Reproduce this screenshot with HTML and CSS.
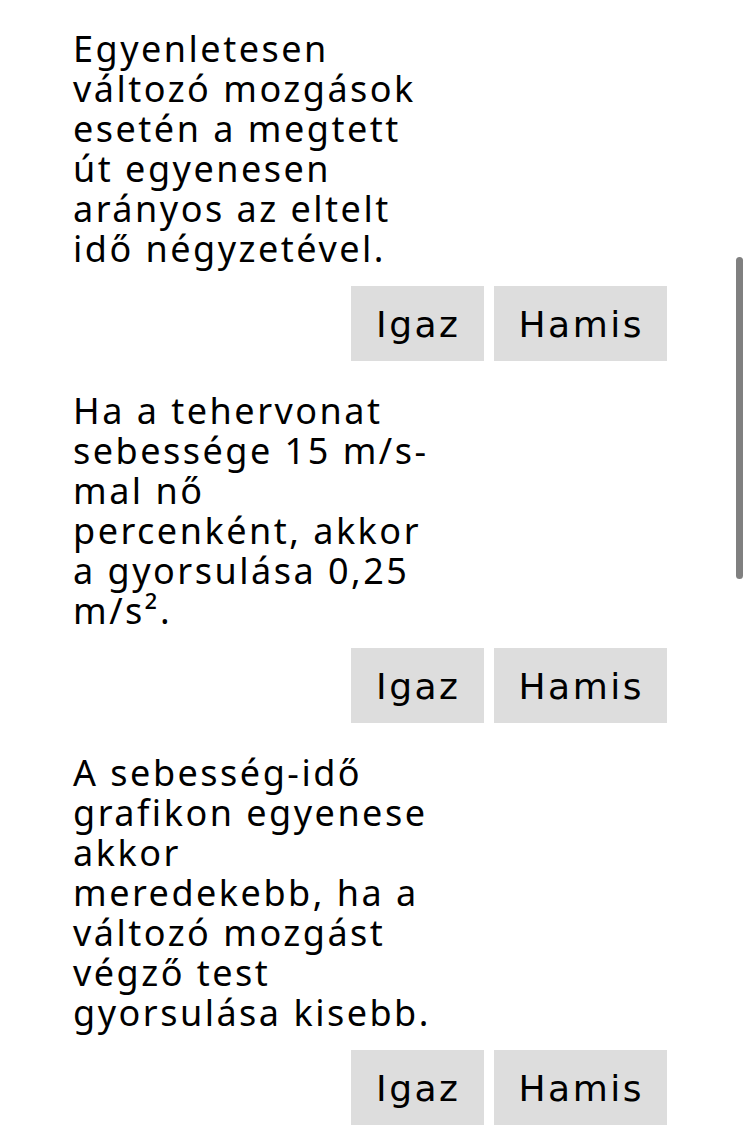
FILE: index.html
```html
<!DOCTYPE html>
<html lang="hu">
<head>
<meta charset="utf-8">
<title>Igaz vagy hamis</title>
<link rel="stylesheet" href="styles.css">
</head>
<body>
<main class="quiz">
  <section class="item">
    <p class="statement">Egyenletesen változó mozgások esetén a megtett út egyenesen arányos az eltelt idő négyzetével.</p>
    <div class="answers">
      <button class="btn">Igaz</button>
      <button class="btn">Hamis</button>
    </div>
  </section>
  <section class="item">
    <p class="statement">Ha a tehervonat sebessége 15 m/s-mal nő percenként, akkor a gyorsulása 0,25 m/s².</p>
    <div class="answers">
      <button class="btn">Igaz</button>
      <button class="btn">Hamis</button>
    </div>
  </section>
  <section class="item">
    <p class="statement">A sebesség-idő grafikon egyenese akkor meredekebb, ha a változó mozgást végző test gyorsulása kisebb.</p>
    <div class="answers">
      <button class="btn">Igaz</button>
      <button class="btn">Hamis</button>
    </div>
  </section>
</main>
<div class="scrollbar"></div>
</body>
</html>
```

FILE: styles.css
```css
html, body {
  margin: 0;
  padding: 0;
  background: #ffffff;
  height: 100%;
  overflow: hidden;
}
body {
  font-family: "Noto Sans", "Open Sans", sans-serif;
  color: #000000;
}
.quiz {
  width: 594px;
  margin-left: 73px;
  padding-top: 29px;
  display: flex;
  flex-direction: column;
  gap: 30px;
}
.item {
  display: flex;
  flex-direction: column;
  gap: 17px;
}
.statement {
  margin: 0;
  width: 361px;
  font-size: 36px;
  line-height: 40px;
  letter-spacing: 2.5px;
}
.answers {
  display: flex;
  justify-content: flex-end;
  gap: 10px;
}
.btn {
  font-family: "DejaVu Sans", sans-serif;
  font-size: 36px;
  line-height: 41px;
  letter-spacing: 2.5px;
  padding: 18px 23px 16px 25px;
  border: none;
  border-radius: 0;
  background: #dddddd;
  color: #000000;
  margin: 0;
}
.scrollbar {
  position: absolute;
  left: 736px;
  top: 257px;
  width: 7px;
  height: 322px;
  border-radius: 4px;
  background: #808080;
}
```
